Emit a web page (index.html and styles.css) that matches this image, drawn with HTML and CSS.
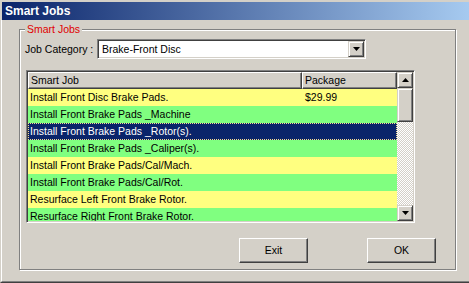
FILE: index.html
```html
<!DOCTYPE html>
<html>
<head>
<meta charset="utf-8">
<link rel="stylesheet" href="styles.css">
</head>
<body>
<div class="window">
  <div class="titlebar">Smart Jobs</div>
  <div class="client">
    <div class="group">
      <div class="legend">Smart Jobs</div>
      <div class="category">
        <span class="label">Job Category :</span>
        <div class="combo">
          <span class="combo-text">Brake-Front Disc</span>
          <span class="combo-btn"><svg width="7" height="4" viewBox="0 0 7 4"><path d="M0 0H7L3.5 4Z" fill="#000"/></svg></span>
        </div>
      </div>
      <div class="list">
        <div class="list-main">
          <div class="list-head">
            <div class="hcell c1">Smart Job</div>
            <div class="hcell c2">Package</div>
          </div>
          <div class="list-body">
            <div class="row yellow"><span class="c1">Install Front Disc Brake Pads.</span><span class="c2">$29.99</span></div>
            <div class="row green"><span class="c1">Install Front Brake Pads _Machine</span><span class="c2"></span></div>
            <div class="row selected"><span class="c1">Install Front Brake Pads _Rotor(s).</span><span class="c2"></span></div>
            <div class="row green"><span class="c1">Install Front Brake Pads _Caliper(s).</span><span class="c2"></span></div>
            <div class="row yellow"><span class="c1">Install Front Brake Pads/Cal/Mach.</span><span class="c2"></span></div>
            <div class="row green"><span class="c1">Install Front Brake Pads/Cal/Rot.</span><span class="c2"></span></div>
            <div class="row yellow"><span class="c1">Resurface Left Front Brake Rotor.</span><span class="c2"></span></div>
            <div class="row green"><span class="c1">Resurface Right Front Brake Rotor.</span><span class="c2"></span></div>
          </div>
        </div>
        <div class="vscroll">
          <div class="sbtn"><svg width="7" height="4" viewBox="0 0 7 4"><path d="M3.5 0L7 4H0Z" fill="#000"/></svg></div>
          <div class="thumb"></div>
          <div class="track"></div>
          <div class="sbtn"><svg width="7" height="4" viewBox="0 0 7 4"><path d="M0 0H7L3.5 4Z" fill="#000"/></svg></div>
        </div>
      </div>
      <div class="buttons">
        <div class="btn">Exit</div>
        <div class="btn">OK</div>
      </div>
    </div>
  </div>
</div>
</body>
</html>
```
FILE: styles.css
```css
* { box-sizing: border-box; }
html, body {
  margin: 0;
  padding: 0;
  width: 469px;
  height: 283px;
  overflow: hidden;
  background: #d4d0c8;
  font-family: "Liberation Sans", Arial, sans-serif;
  font-size: 10.5px;
  color: #000;
}
.window {
  width: 469px;
  height: 283px;
  border-top: 1px solid #d4d0c8;
  border-left: 1px solid #d4d0c8;
  border-bottom: 1px solid #404040;
  display: flex;
  flex-direction: column;
}
.titlebar {
  margin-top: 1px;
  margin-left: 1px;
  height: 18px;
  line-height: 18px;
  padding-left: 3px;
  color: #fff;
  font-weight: bold;
  font-size: 12px;
  background: linear-gradient(to right, #0a246a 0%, #a6caf0 100%);
}
.client {
  flex: 1;
  border-left: 1px solid #fff;
  border-bottom: 1px solid #808080;
  padding: 9px 13px 0 17px;
}
.group {
  height: 241px;
  border: 1px solid #808080;
  box-shadow: inset 1px 1px 0 #fff, 1px 1px 0 #fff;
  display: flex;
  flex-direction: column;
}
.legend {
  align-self: flex-start;
  margin: -7px 0 0 5px;
  padding: 0 2px;
  height: 12px;
  line-height: 12px;
  color: #e00000;
  background: #d4d0c8;
}
.category {
  margin-top: 4px;
  padding-left: 5px;
  display: flex;
  align-items: center;
  height: 20px;
}
.label {
  width: 72px;
}
.combo {
  width: 269px;
  height: 20px;
  border: 1px solid;
  border-color: #808080 #fff #fff #808080;
  padding: 1px;
  box-shadow: inset 1px 1px 0 #404040, inset -1px -1px 0 #d4d0c8;
  display: flex;
}
.combo-text {
  flex: 1;
  background: #fff;
  line-height: 16px;
  padding-left: 3px;
}
.combo-btn {
  width: 16px;
  height: 16px;
  background: #d4d0c8;
  border: 1px solid;
  border-color: #d4d0c8 #404040 #404040 #d4d0c8;
  box-shadow: inset 1px 1px 0 #fff, inset -1px -1px 0 #808080;
  display: flex;
  align-items: center;
  justify-content: center;
}
.list {
  margin: 11px 0 0 6px;
  width: 389px;
  height: 153px;
  border: 1px solid;
  border-color: #808080 #fff #fff #808080;
  padding: 1px;
  box-shadow: inset 1px 1px 0 #404040, inset -1px -1px 0 #d4d0c8;
  display: flex;
}
.list-main {
  flex: 1;
  display: flex;
  flex-direction: column;
  overflow: hidden;
}
.list-head {
  display: flex;
  height: 17px;
  flex: none;
}
.hcell {
  height: 17px;
  line-height: 15px;
  padding-left: 2px;
  background: #d4d0c8;
  border: 1px solid;
  border-color: #fff #404040 #404040 #fff;
  box-shadow: inset -1px -1px 0 #808080;
}
.c1 { width: 274px; flex: none; }
.c2 { width: 95px; flex: none; }
.list-body {
  flex: 1;
  overflow: hidden;
}
.row {
  display: flex;
  height: 17px;
  line-height: 17px;
}
.row .c1 { padding-left: 2px; }
.row .c2 { padding-left: 3px; }
.yellow { background: #ffff80; }
.green { background: #80ff80; }
.selected {
  background: #0a246a;
  color: #fff;
  outline: 1px dotted #f5db95;
  outline-offset: -1px;
}
.vscroll {
  width: 16px;
  display: flex;
  flex-direction: column;
}
.sbtn, .thumb {
  background: #d4d0c8;
  border: 1px solid;
  border-color: #d4d0c8 #404040 #404040 #d4d0c8;
  box-shadow: inset 1px 1px 0 #fff, inset -1px -1px 0 #808080;
}
.sbtn {
  height: 16px;
  display: flex;
  align-items: center;
  justify-content: center;
}
.thumb {
  height: 34px;
}
.track {
  flex: 1;
  background-image: conic-gradient(#fff 25%, #d4d0c8 0 50%, #fff 0 75%, #d4d0c8 0);
  background-size: 2px 2px;
}
.buttons {
  margin-top: 15px;
  padding-right: 19px;
  display: flex;
  justify-content: flex-end;
  gap: 59px;
}
.btn {
  width: 69px;
  height: 25px;
  line-height: 23px;
  text-align: center;
  background: #d4d0c8;
  border: 1px solid;
  border-color: #fff #404040 #404040 #fff;
  box-shadow: inset -1px -1px 0 #808080;
}
```
